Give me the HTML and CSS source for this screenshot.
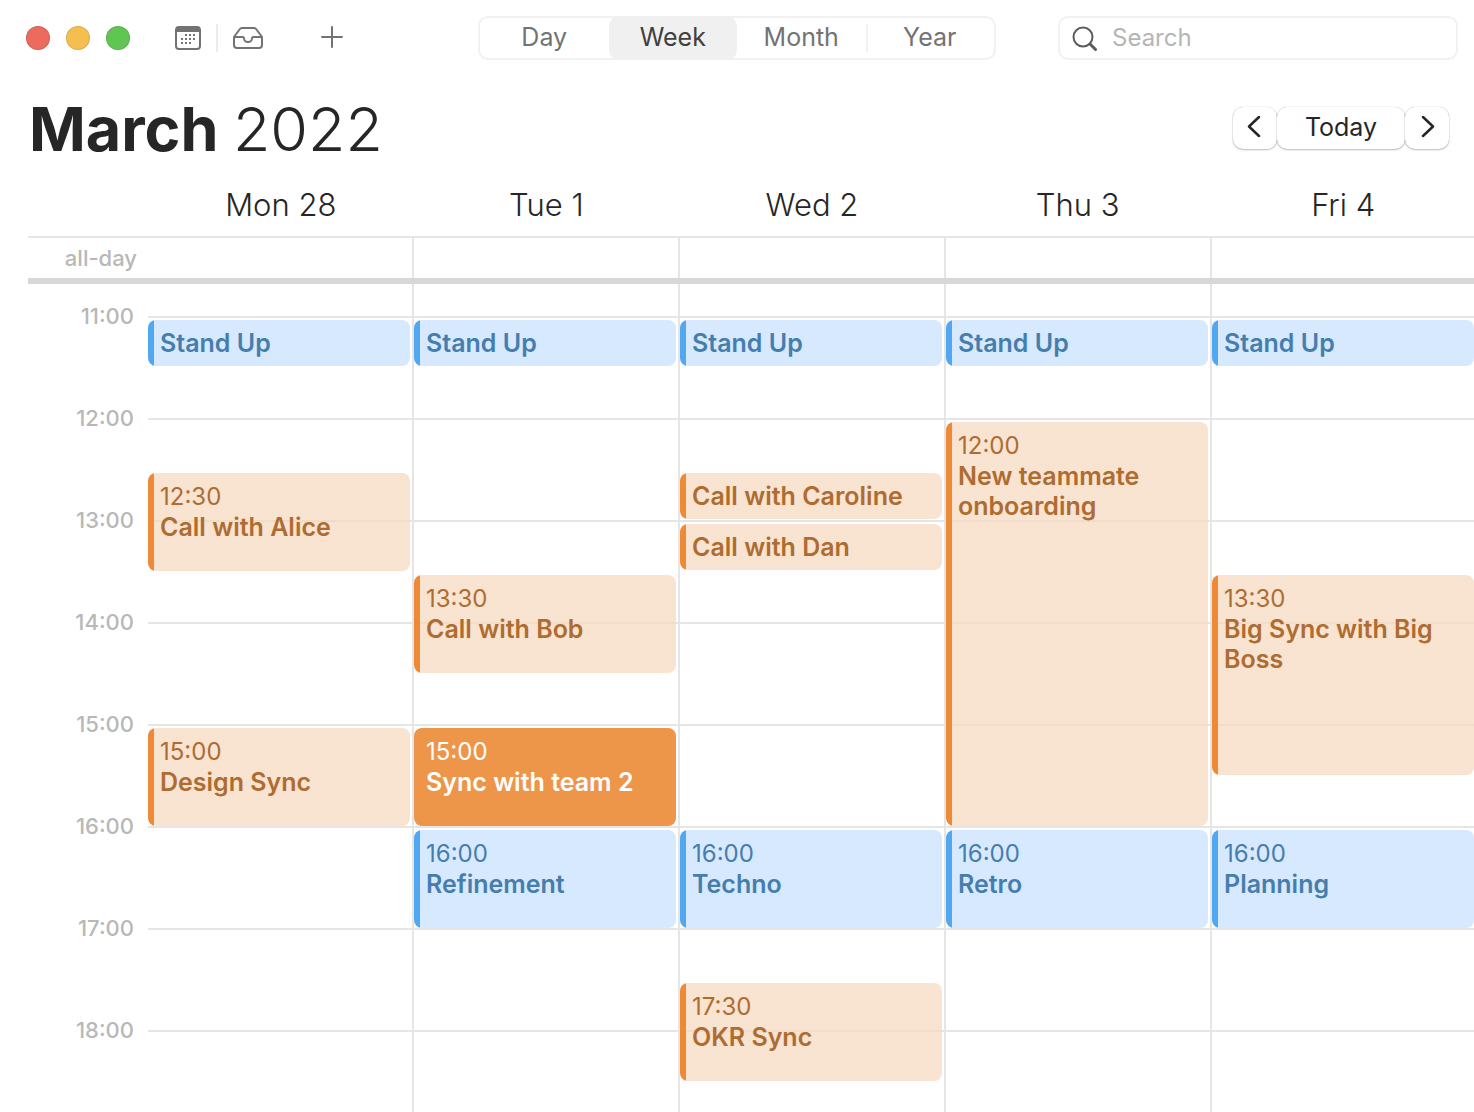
FILE: index.html
```html
<!DOCTYPE html>
<html lang="en">

<head>
    <meta charset="UTF-8">
    <meta name="viewport" content="width=device-width, initial-scale=1.0">
    <title>Calendar</title>
    <link rel="stylesheet" href="styles.css">
</head>

<body>
    <header class="toolbar">
        <div class="toolbar-left">
            <div class="window-buttons">
                <button class="light red" aria-label="Close"></button>
                <button class="light yellow" aria-label="Minimize"></button>
                <button class="light green" aria-label="Zoom"></button>
            </div>
            <button class="icon-button" aria-label="Calendars">
                <svg width="26" height="24" viewBox="0 0 26 24">
                    <rect x="1" y="1" width="24" height="22" rx="3" fill="none" stroke="#737373" stroke-width="2"/>
                    <path d="M1 6V4a3 3 0 0 1 3-3h18a3 3 0 0 1 3 3v2z" fill="#737373"/>
                    <path d="M10 9h2m2 0h2m2 0h2M6 13h2m2 0h2m2 0h2m2 0h2M6 17h2m2 0h2m2 0h2" stroke="#737373" stroke-width="2"/>
                </svg>
            </button>
            <span class="divider"></span>
            <button class="icon-button" aria-label="Inbox">
                <svg width="30" height="22" viewBox="0 0 30 22" fill="none" stroke="#737373" stroke-width="2" stroke-linejoin="round">
                    <path d="M1 10 6.500 2.500Q7.500 1 9 1h12q1.500 0 2.500 1.500L29 10V18a3 3 0 0 1-3 3H4a3 3 0 0 1-3-3z"/>
                    <path d="M1 10h8.500q1.500 0 1.500 1.500a4 3.500 0 0 0 8 0q0-1.500 1.500-1.500H29"/>
                </svg>
            </button>
            <button class="icon-button add" aria-label="New event">
                <svg width="22" height="24" viewBox="0 0 22 24" stroke="#737373" stroke-width="2" stroke-linecap="round">
                    <path d="M11 1v20M1 11h20"/>
                </svg>
            </button>
        </div>

        <nav class="views">
            <button>Day</button>
            <button class="active">Week</button>
            <button>Month</button>
            <button class="split">Year</button>
        </nav>

        <label class="search">
            <svg width="26" height="26" viewBox="0 0 26 26" fill="none" stroke="#5c5c5c" stroke-linecap="round">
                <circle cx="11" cy="12" r="9.500" stroke-width="2"/>
                <path d="M18 19l5.500 5.500" stroke-width="3"/>
            </svg>
            <input type="text" placeholder="Search" aria-label="Search">
        </label>
    </header>

    <div class="titlebar">
        <h1>March <span>2022</span></h1>
        <div class="pager">
            <button class="arrow" aria-label="Previous week">
                <svg width="16" height="22" viewBox="0 0 16 22" fill="none" stroke="#262626" stroke-width="2.500" stroke-linecap="round" stroke-linejoin="round">
                    <path d="M12 1 2 10.500l10 9.500"/>
                </svg>
            </button>
            <button class="today">Today</button>
            <button class="arrow" aria-label="Next week">
                <svg width="16" height="22" viewBox="0 0 16 22" fill="none" stroke="#262626" stroke-width="2.500" stroke-linecap="round" stroke-linejoin="round">
                    <path d="M4 1 14 10.500 4 20"/>
                </svg>
            </button>
        </div>
    </div>

    <main class="week">
        <div class="row heads">
            <div class="gutter"></div>
            <div class="col">Mon 28</div>
            <div class="col">Tue 1</div>
            <div class="col">Wed 2</div>
            <div class="col">Thu 3</div>
            <div class="col">Fri 4</div>
        </div>

        <div class="row all-day">
            <div class="gutter">all-day</div>
            <div class="col"></div>
            <div class="col"></div>
            <div class="col"></div>
            <div class="col"></div>
            <div class="col"></div>
        </div>

        <div class="row hours">
            <div class="gutter">
                <time>11:00</time>
                <time>12:00</time>
                <time>13:00</time>
                <time>14:00</time>
                <time>15:00</time>
                <time>16:00</time>
                <time>17:00</time>
                <time>18:00</time>
            </div>

            <div class="col">
                <div class="event blue short at-1100"><b>Stand Up</b></div>
                <div class="event orange at-1230"><time>12:30</time><b>Call with Alice</b></div>
                <div class="event orange at-1500"><time>15:00</time><b>Design Sync</b></div>
            </div>

            <div class="col">
                <div class="event blue short at-1100"><b>Stand Up</b></div>
                <div class="event orange at-1330"><time>13:30</time><b>Call with Bob</b></div>
                <div class="event selected at-1500"><time>15:00</time><b>Sync with team 2</b></div>
                <div class="event blue at-1600"><time>16:00</time><b>Refinement</b></div>
            </div>

            <div class="col">
                <div class="event blue short at-1100"><b>Stand Up</b></div>
                <div class="event orange short at-1230"><b>Call with Caroline</b></div>
                <div class="event orange short at-1300"><b>Call with Dan</b></div>
                <div class="event blue at-1600"><time>16:00</time><b>Techno</b></div>
                <div class="event orange at-1730"><time>17:30</time><b>OKR Sync</b></div>
            </div>

            <div class="col">
                <div class="event blue short at-1100"><b>Stand Up</b></div>
                <div class="event orange four-hours at-1200"><time>12:00</time><b>New teammate onboarding</b></div>
                <div class="event blue at-1600"><time>16:00</time><b>Retro</b></div>
            </div>

            <div class="col">
                <div class="event blue short at-1100"><b>Stand Up</b></div>
                <div class="event orange two-hours at-1330"><time>13:30</time><b>Big Sync with Big Boss</b></div>
                <div class="event blue at-1600"><time>16:00</time><b>Planning</b></div>
            </div>
        </div>
    </main>
</body>

</html>
```
FILE: styles.css
```css
* {
    box-sizing: border-box;
}

body {
    margin: 0;
    height: 100vh;
    display: flex;
    flex-direction: column;
    overflow: hidden;
    background: #fff;
    color: #262626;
    font-family: Inter, "Liberation Sans", sans-serif;
    font-size: 24px;
    line-height: 30px;
}

button {
    padding: 0;
    border: none;
    background: none;
    color: inherit;
    font: inherit;
}

svg {
    display: block;
}

/* toolbar */

.toolbar {
    display: grid;
    grid-template-columns: 1fr 518px 1fr;
    align-items: center;
    padding: 16px;
}

.toolbar-left {
    display: flex;
    align-items: center;
    padding-left: 10px;
}

.window-buttons {
    display: flex;
    gap: 16px;
    margin-right: 45px;
}

.light {
    width: 24px;
    height: 24px;
    border: 1px solid rgba(0, 0, 0, 0.1);
    border-radius: 50%;
}

.red {
    background: #ec6a5e;
}

.yellow {
    background: #f4bf4f;
}

.green {
    background: #61c554;
}

.divider {
    width: 2px;
    height: 28px;
    margin: 0 15px;
    background: #ebebeb;
}

.add {
    margin-left: 58px;
}

.views {
    display: flex;
    height: 44px;
    border: 2px solid #f1f1f1;
    border-radius: 10px;
    color: #737373;
    font-size: 25px;
}

.views button {
    flex: 1;
    position: relative;
    padding-bottom: 2px;
}

.views .active {
    margin: -2px 0;
    border-radius: 10px;
    background: #f0f0f0;
    color: #404040;
}

.views .split::before {
    content: "";
    position: absolute;
    left: 0;
    top: 6px;
    width: 2px;
    height: 28px;
    background: #f1f1f1;
}

.search {
    display: flex;
    align-items: center;
    justify-self: end;
    gap: 14px;
    width: 400px;
    height: 44px;
    padding: 0 12px;
    border: 2px solid #f1f1f1;
    border-radius: 10px;
}

.search input {
    flex: 1;
    min-width: 0;
    padding: 0;
    border: none;
    outline: none;
    background: none;
    font: inherit;
}

.search input::placeholder {
    color: #b5b5b5;
}

/* month title */

.titlebar {
    display: flex;
    align-items: center;
    justify-content: space-between;
    padding: 14px 25px 8px 29px;
}

h1 {
    margin: 0;
    padding-top: 2px;
    font-size: 61px;
    font-weight: 700;
    line-height: 74px;
}

h1 span {
    font-weight: 300;
}

.pager {
    display: flex;
}

.pager button {
    display: flex;
    align-items: center;
    justify-content: center;
    height: 42px;
    padding-bottom: 2px;
    border-radius: 10px;
    background: #fff;
    box-shadow: 0 0 1px rgba(0, 0, 0, 0.3), 0 1px 2px rgba(0, 0, 0, 0.25);
    font-size: 25px;
}

.pager .arrow {
    width: 44px;
}

.pager .today {
    width: 128px;
}

/* week grid */

.week {
    flex: 1;
    min-height: 0;
    display: flex;
    flex-direction: column;
    padding-left: 28px;
}

.row {
    display: flex;
}

.gutter {
    width: 120px;
    color: #b8b8b8;
    font-size: 22px;
    text-align: right;
}

.col {
    flex: 1 1 0;
    min-width: 0;
    padding-right: 2px;
    border-right: 2px solid #e5e5e5;
}

.col:last-child {
    padding-right: 0;
    border-right: none;
}

.heads {
    border-bottom: 2px solid #e5e5e5;
    font-size: 31px;
    font-weight: 300;
    line-height: 62px;
    text-align: center;
}

.heads .col {
    padding: 0 0 0 2px;
    border-color: transparent;
}

.all-day {
    height: 46px;
    border-bottom: 6px solid #d8d8d8;
    line-height: 40px;
}

.all-day .gutter {
    padding-right: 11px;
    font-weight: 500;
}

.hours {
    flex: 1;
    min-height: 0;
    overflow: hidden;
}

.hours .gutter {
    padding: 17px 14px 0 0;
    font-weight: 500;
}

.hours .gutter time {
    display: block;
    height: 102px;
}

/* one grid row per half hour, 11:00 starts at line 2 */
.hours .col {
    display: grid;
    grid-template-rows: 32px repeat(16, 51px);
    background: repeating-linear-gradient(#e5e5e5 0 2px, transparent 2px 102px) 0 32px no-repeat;
}

.event {
    grid-column: 1;
    grid-row-end: span 2;
    margin-top: 4px;
    padding: 9px 12px;
    border-radius: 8px;
}

.event time,
.event b {
    display: block;
}

.event b {
    font-size: 25px;
    font-weight: 600;
}

.short {
    grid-row-end: span 1;
    margin-bottom: 1px;
    padding: 8px 12px;
}

.two-hours {
    grid-row-end: span 4;
}

.four-hours {
    grid-row-end: span 8;
}

.at-1100 { grid-row-start: 2; }
.at-1200 { grid-row-start: 4; }
.at-1230 { grid-row-start: 5; }
.at-1300 { grid-row-start: 6; }
.at-1330 { grid-row-start: 7; }
.at-1500 { grid-row-start: 10; }
.at-1600 { grid-row-start: 12; }
.at-1730 { grid-row-start: 15; }

.blue {
    background: linear-gradient(to right, #51a8f0 6px, #d7e9ff 6px);
    color: #457ead;
}

.orange {
    background: linear-gradient(to right, #ee8a36 6px, rgba(246, 215, 189, 0.7) 6px);
    color: #ae6c31;
}

.selected {
    background: #ed964a;
    color: #fff;
}
```
